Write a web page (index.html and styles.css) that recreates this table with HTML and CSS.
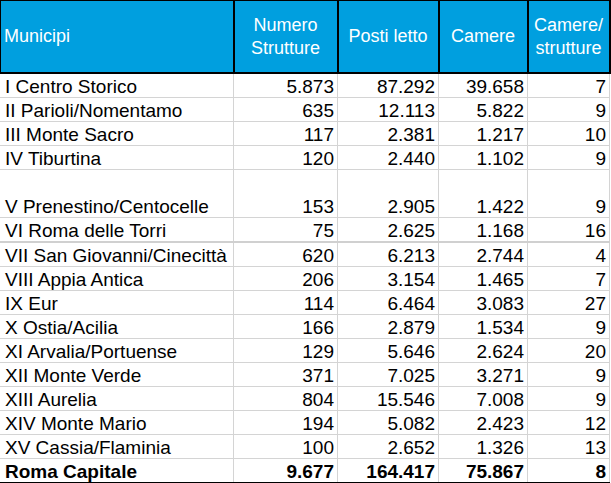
FILE: index.html
```html
<!DOCTYPE html>
<html lang="it">
<head>
<meta charset="utf-8">
<title>Municipi</title>
<link rel="stylesheet" href="styles.css">
</head>
<body>
<table class="grid">
  <colgroup>
    <col class="c1"><col class="c2"><col class="c3"><col class="c4"><col class="c5">
  </colgroup>
  <thead>
    <tr>
      <th class="left">Municipi</th>
      <th>Numero<br>Strutture</th>
      <th>Posti letto</th>
      <th>Camere</th>
      <th>Camere/<br>strutture</th>
    </tr>
  </thead>
  <tbody>
    <tr><td>I Centro Storico</td><td>5.873</td><td>87.292</td><td>39.658</td><td>7</td></tr>
    <tr><td>II Parioli/Nomentamo</td><td>635</td><td>12.113</td><td>5.822</td><td>9</td></tr>
    <tr><td>III Monte Sacro</td><td>117</td><td>2.381</td><td>1.217</td><td>10</td></tr>
    <tr><td>IV Tiburtina</td><td>120</td><td>2.440</td><td>1.102</td><td>9</td></tr>
    <tr class="tall"><td>V Prenestino/Centocelle</td><td>153</td><td>2.905</td><td>1.422</td><td>9</td></tr>
    <tr class="sep"><td>VI Roma delle Torri</td><td>75</td><td>2.625</td><td>1.168</td><td>16</td></tr>
    <tr><td>VII San Giovanni/Cinecittà</td><td>620</td><td>6.213</td><td>2.744</td><td>4</td></tr>
    <tr><td>VIII Appia Antica</td><td>206</td><td>3.154</td><td>1.465</td><td>7</td></tr>
    <tr><td>IX Eur</td><td>114</td><td>6.464</td><td>3.083</td><td>27</td></tr>
    <tr><td>X Ostia/Acilia</td><td>166</td><td>2.879</td><td>1.534</td><td>9</td></tr>
    <tr><td>XI Arvalia/Portuense</td><td>129</td><td>5.646</td><td>2.624</td><td>20</td></tr>
    <tr><td>XII Monte Verde</td><td>371</td><td>7.025</td><td>3.271</td><td>9</td></tr>
    <tr><td>XIII Aurelia</td><td>804</td><td>15.546</td><td>7.008</td><td>9</td></tr>
    <tr><td>XIV Monte Mario</td><td>194</td><td>5.082</td><td>2.423</td><td>12</td></tr>
    <tr><td>XV Cassia/Flaminia</td><td>100</td><td>2.652</td><td>1.326</td><td>13</td></tr>
    <tr class="total"><td>Roma Capitale</td><td>9.677</td><td>164.417</td><td>75.867</td><td>8</td></tr>
  </tbody>
</table>
</body>
</html>
```

FILE: styles.css
```css
html, body {
  margin: 0;
  padding: 0;
  background: #ffffff;
}

.grid {
  border-collapse: collapse;
  table-layout: fixed;
  width: 609px;
  font-family: "Liberation Sans", Arial, sans-serif;
  color: #000000;
}

.c1 { width: 233px; }
.c2 { width: 104px; }
.c3 { width: 101px; }
.c4 { width: 89px; }
.c5 { width: 82px; }

.grid th {
  background: #009fdf;
  color: #ffffff;
  font-weight: normal;
  font-size: 18px;
  line-height: 23px;
  height: 71px;
  padding: 0 3px;
  text-align: center;
  vertical-align: middle;
  border: 2px solid #000000;
  border-top-width: 1px;
}

.grid th:first-child {
  border-left-width: 1px;
}

.grid th.left {
  text-align: left;
}

.grid td {
  font-size: 19px;
  line-height: 21px;
  height: 21px;
  padding: 2px 3px 0 4px;
  text-align: right;
  vertical-align: bottom;
  white-space: nowrap;
  border: 1px solid #d4d4d4;
}

.grid td:first-child {
  text-align: left;
  border-left-color: #ffffff;
}

.grid tr.tall td {
  height: 45px;
}

.grid tr.sep td {
  border-bottom: 2px solid #d0d0d0;
}

.grid tr.total td {
  font-weight: bold;
  border-bottom: 2px solid #000000;
}
```
